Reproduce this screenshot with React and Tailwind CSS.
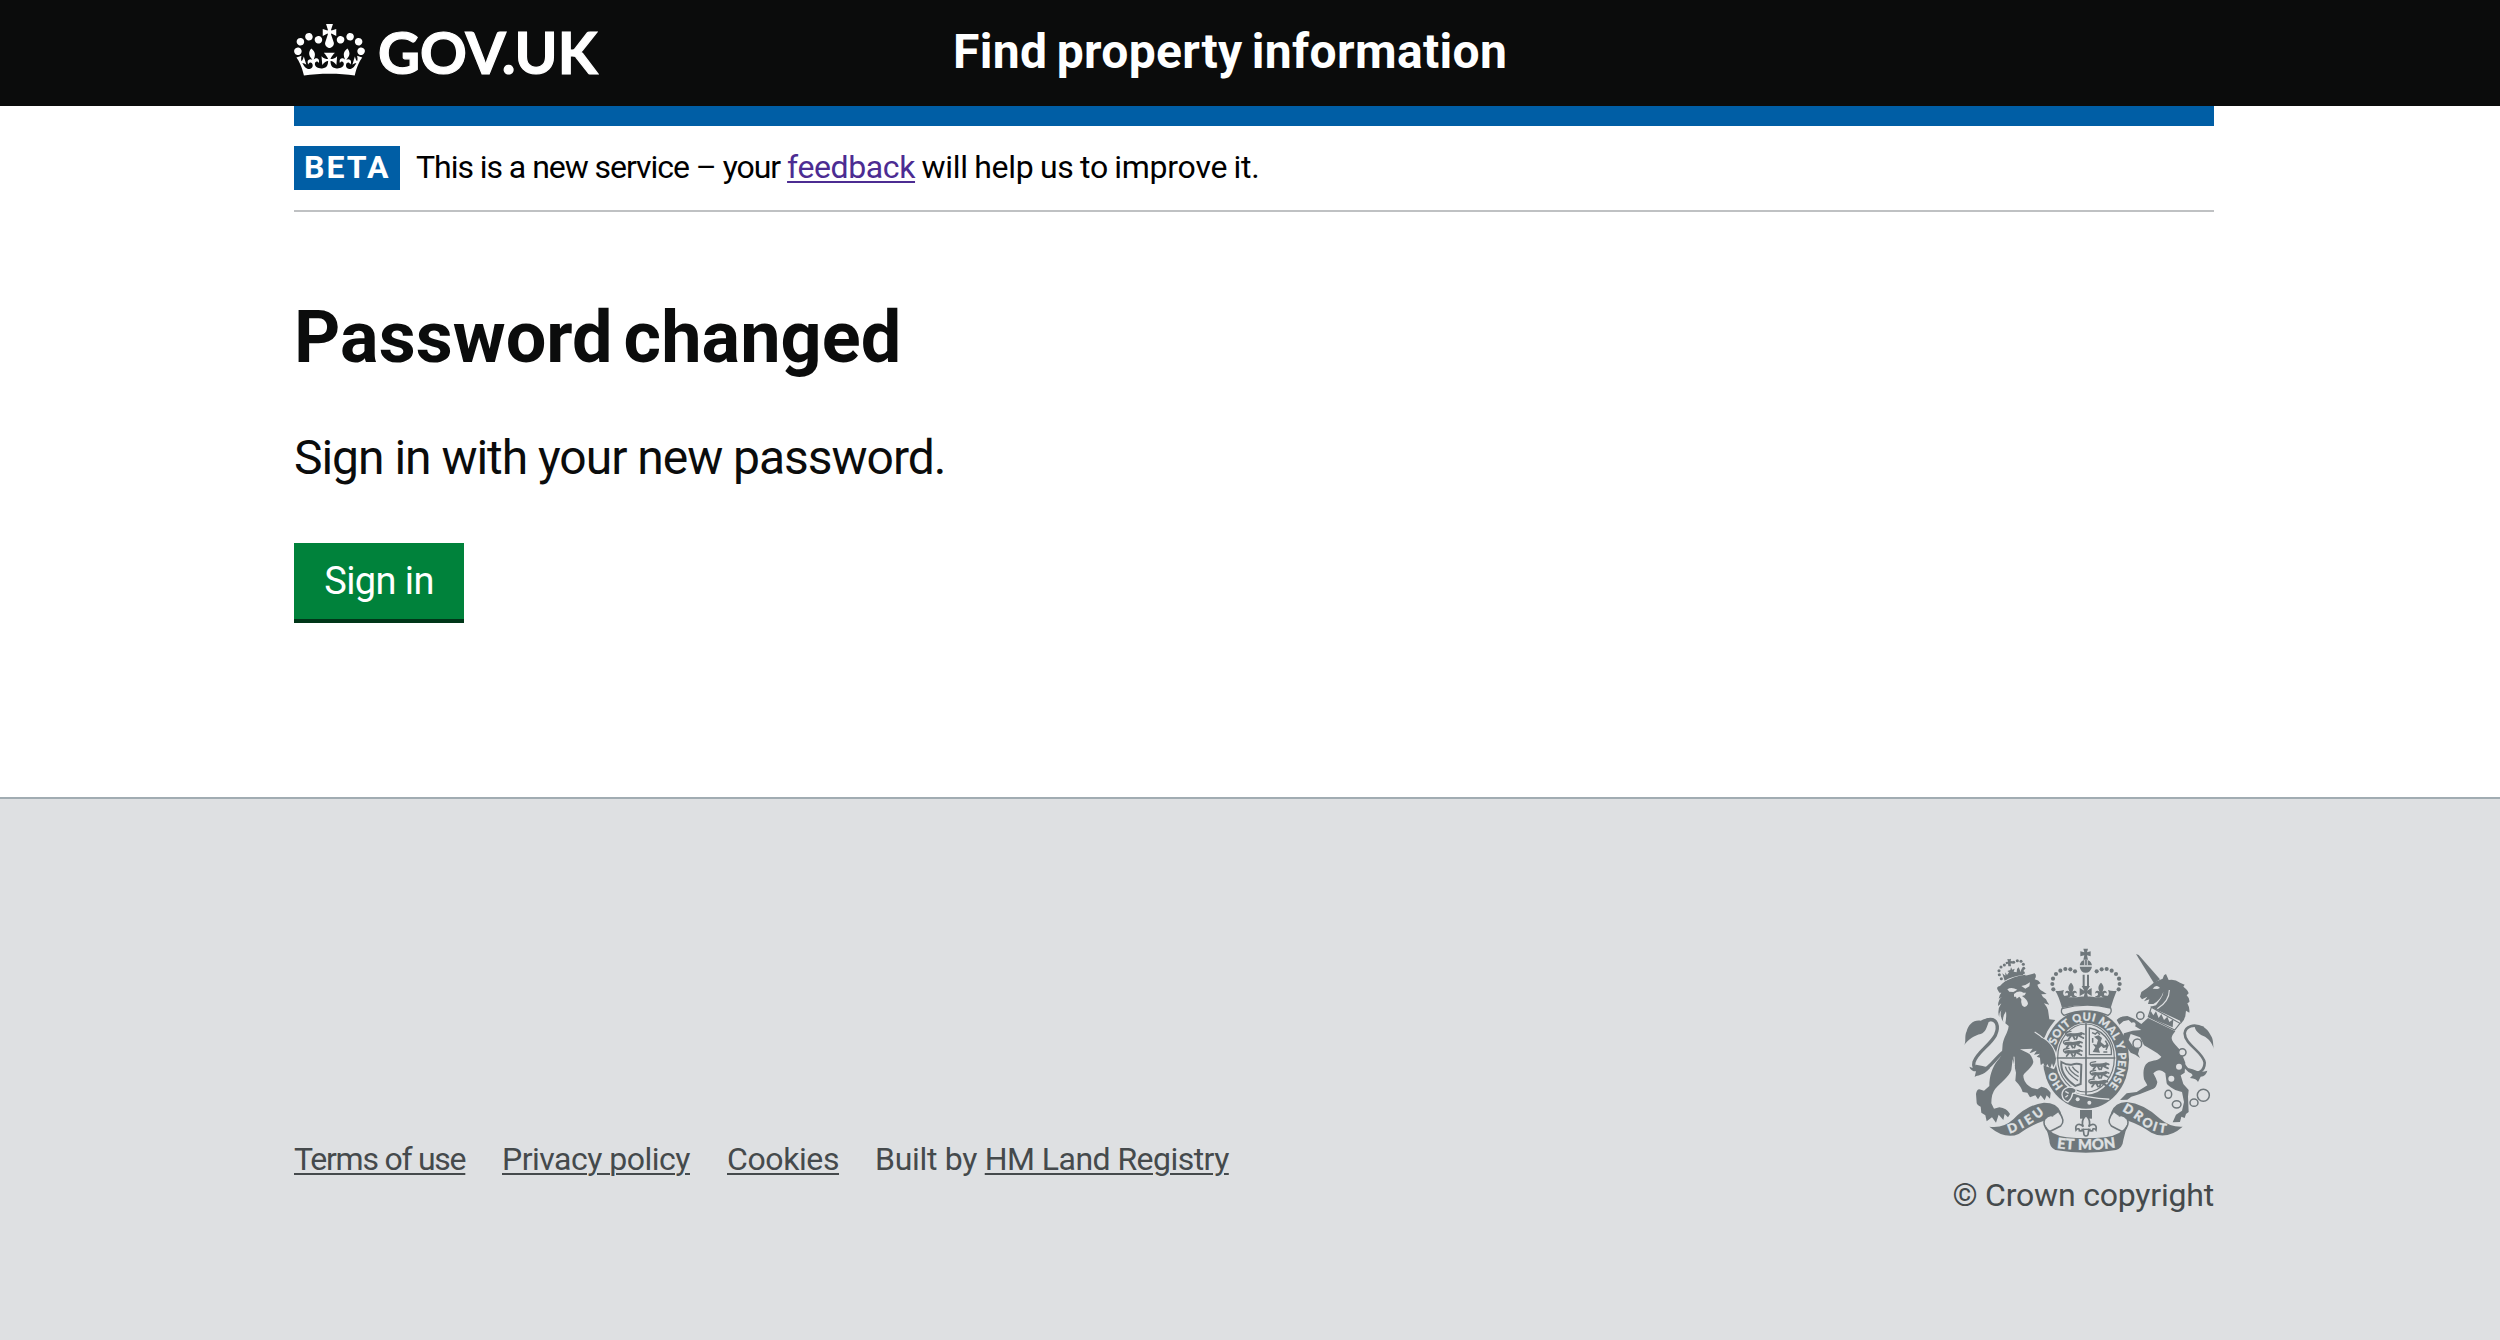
import React from "react";

const CROWN =
  "M25 30.2c3.5 1.5 7.7-.2 9.1-3.7 1.5-3.6-.2-7.8-3.9-9.2-3.6-1.4-7.6.3-9.1 3.9-1.4 3.5.3 7.5 3.9 9zM9 39.5c3.6 1.5 7.8-.2 9.2-3.7 1.5-3.6-.2-7.8-3.9-9.1-3.6-1.5-7.6.2-9.1 3.8-1.4 3.5.3 7.5 3.8 9zM4.4 57.2c3.5 1.5 7.7-.2 9.1-3.8 1.5-3.6-.2-7.7-3.9-9.1-3.5-1.5-7.6.3-9.1 3.8-1.4 3.5.3 7.6 3.9 9.1zm38.3-21.4c3.5 1.5 7.7-.2 9.1-3.8 1.5-3.6-.2-7.7-3.9-9.1-3.6-1.5-7.6.3-9.1 3.8-1.3 3.6.4 7.7 3.9 9.1zm64.4-5.6c-3.6 1.5-7.8-.2-9.1-3.7-1.5-3.6.2-7.8 3.8-9.2 3.6-1.4 7.7.3 9.2 3.9 1.3 3.5-.4 7.5-3.9 9zm15.9 9.3c-3.6 1.5-7.7-.2-9.1-3.7-1.5-3.6.2-7.8 3.7-9.1 3.6-1.5 7.7.2 9.2 3.8 1.5 3.5-.3 7.5-3.8 9zm4.7 17.7c-3.6 1.5-7.8-.2-9.2-3.8-1.5-3.6.2-7.7 3.9-9.1 3.6-1.5 7.7.3 9.2 3.8 1.3 3.5-.4 7.6-3.9 9.1zM89.3 35.8c-3.6 1.5-7.8-.2-9.2-3.8-1.4-3.6.2-7.7 3.9-9.1 3.6-1.5 7.7.3 9.2 3.8 1.4 3.6-.3 7.7-3.9 9.1zM69.7 17.7l8.9 4.7V9.3l-8.9 2.8c-.2-.3-.5-.6-.9-.9L72.4 0H59.6l3.5 11.2c-.3.3-.6.5-.9.9l-8.8-2.8v13.1l8.8-4.7c.3.3.6.7.9.9l-5 15.4v.1c-.2.8-.4 1.6-.4 2.4 0 4.1 3.1 7.5 7 8.1h.2c.3 0 .7.1 1 .1.4 0 .7 0 1-.1h.2c4-.6 7.1-4.1 7.1-8.1 0-.8-.1-1.7-.4-2.4V34l-5.1-15.4c.4-.2.7-.6 1-.9zM66 92.8c16.9 0 32.8 1.1 47.1 3.2 4-16.9 8.9-26.7 14-33.5l-9.6-3.4c1 4.9 1.1 7.2 0 10.2-1.5-1.4-3-4.3-4.2-8.7L108.6 76c2.8-2 5-3.2 7.5-3.3-4.4 9.4-10 11.9-13.6 11.2-4.3-.8-6.3-4.6-5.6-7.9 1-4.7 5.7-5.9 8-.5 4.3-8.7-3-11.4-7.6-8.8 7.1-7.2 7.9-13.5 2.1-21.1-8 6.1-8.1 12.3-4.5 20.8-4.7-5.4-12.1-2.5-9.5 6.2 3.4-5.2 7.9-2 7.2 3.1-.6 4.3-6.4 7.8-13.5 7.2-10.3-.9-10.9-8-11.2-13.8 2.5-.5 7.1 1.8 11 7.3L80.2 60c-4.1 4.4-8 5.3-12.3 5.4 1.4-4.4 8-11.6 8-11.6H55.5s6.4 7.2 7.9 11.6c-4.2-.1-8-1-12.3-5.4l1.4 16.4c3.9-5.5 8.5-7.7 10.9-7.3-.3 5.8-.9 12.8-11.1 13.8-7.2.6-12.9-2.9-13.5-7.2-.7-5 3.8-8.3 7.1-3.1 2.7-8.7-4.6-11.6-9.4-6.2 3.7-8.5 3.6-14.7-4.6-20.8-5.8 7.6-5 13.9 2.2 21.1-4.7-2.6-11.9.1-7.7 8.8 2.3-5.5 7.1-4.2 8.1.5.7 3.3-1.3 7.1-5.7 7.9-3.5.7-9-1.8-13.5-11.2 2.5.1 4.7 1.3 7.5 3.3l-4.7-15.4c-1.2 4.4-2.7 7.2-4.3 8.7-1.1-3-.9-5.3 0-10.2l-9.5 3.4c5 6.9 9.9 16.7 14 33.5 14.8-2.1 30.8-3.2 47.7-3.2z";

const INK = "#6f777b";
const PAPER = "#dee0e2";

// Pearls along the arches of the royal crown
const PEARLS = [
  [340, 178], [337, 162], [339, 146], [348, 132], [361, 122], [376, 117], [391, 118], [405, 124],
  [536, 178], [539, 162], [537, 146], [528, 132], [515, 122], [500, 117], [485, 118], [470, 124],
];
const SMALL_PEARLS = [
  [184, 146], [178, 134], [177, 122], [183, 111], [193, 105], [221, 97], [232, 92], [243, 94], [250, 103], [251, 115], [250, 128],
];

function PassantLion({ x, y }) {
  return (
    <g transform={`translate(${x} ${y})`} fill="none" stroke={INK} strokeLinecap="round" strokeLinejoin="round">
      <path d="M10 9c10-3 22 3 38-3" strokeWidth="10" />
      <path d="M50 3l8 3M44 12l12 6M38 13l-3 8M18 13l-6 8M26 13l4 8" strokeWidth="5.5" />
      <path d="M10 9C2 12 0 2 7 0l12-2" strokeWidth="4" />
    </g>
  );
}

function Fleur({ x, y, s = 1 }) {
  return (
    <path
      transform={`translate(${x} ${y}) scale(${s})`}
      d="M0-26c9 9 10 17 4 27 6-6 15-3 13 6-3-4-8-3-8 2 0 4 4 6 9 5-4 6-14 6-18-1-4 7-14 7-18 1 5 1 9-1 9-5 0-5-5-6-8-2-2-9 7-12 13-6-6-10-5-18 4-27z"
      fill={INK}
    />
  );
}

function RoyalArms() {
  return (
    <svg className="block h-[206px] w-[250px]" viewBox="72 51 750 618" role="img" aria-label="Royal coat of arms">
      <defs>
        <path id="garter-left" d="M370 469A97 115 0 0 1 340 390" />
        <path id="garter-main" d="M347 346A97 115 0 1 1 502 473" />
        <path id="motto-left" d="M208 611Q262 594 322 544" />
        <path id="motto-mid" d="M340 653Q438 667 536 651" />
        <path id="motto-right" d="M546 542Q590 566 612 588Q640 608 690 610" />
      </defs>

      {/* Lion's tail */}
      <path d="M140 270C172 262 178 290 166 316C148 348 112 366 102 396C96 422 124 430 144 412C160 398 172 380 190 366" fill="none" stroke={INK} strokeWidth="10" />
      <path d="M72 346C80 336 72 320 80 304C84 284 102 268 122 272C140 262 156 262 164 268L146 276C140 292 138 306 122 312C104 316 86 326 72 346z" fill={INK} />
      <path d="M88 410C92 420 98 424 108 424L104 441C112 434 128 440 150 414L128 408L108 404L98 414z" fill={INK} />

      {/* Lion's crown */}
      <g fill={INK}>
        {SMALL_PEARLS.map(([x, y]) => <circle key={`${x}-${y}`} cx={x} cy={y} r="4.6" />)}
        <path d="M202 87l6 1 5-2-1 8 6-1v8l-6-1 1 9h-8l-1-8-6 2-1-7 7-1z" />
        <path d="M194 152L187 130l9 7 0-10 5 8 6-8-5-4 9-3 2-8 4 7 7-3-3 9 9 2 1-10 5-5 4 9 0 6 6-12 6 2-3 18Q218 138 194 152z" />
        <path d="M191 157Q222 138 256 134l1 6Q222 146 194 164z" />
      </g>
      {/* Lion */}
      <path
        fill={INK}
        d="M172 178C170 172 174 168 180 168L188 160C212 146 240 140 262 136L284 130C290 136 288 142 284 148Q296 150 302 160L292 164Q296 178 308 184L320 192L304 193Q308 204 318 208Q322 218 328 224L312 220Q322 232 324 240L328 268L346 270L332 288L322 304L312 326C324 334 338 350 346 368L350 386L348 398L342 412L338 400L334 416L324 402L318 414L312 400L304 404L302 384L290 380L300 371L282 374L290 362L268 370L278 356L240 358L262 368Q276 374 280 396C276 414 256 424 250 436C250 452 260 466 276 474L292 478L304 470Q322 472 332 488L330 506L320 496L314 511L302 496L294 508L286 496L270 502L262 488L248 486Q244 470 226 452L228 428L222 402L218 388L214 420C206 442 184 456 166 476Q154 490 154 520L162 536L178 532Q200 534 210 552L204 562L194 552L190 570L176 554L168 578L156 562L140 574L136 556L124 548L122 530Q110 524 110 518L108 492Q110 478 118 478L132 482L148 468C148 440 156 412 174 390C188 376 186 362 188 342C192 320 204 308 206 288L196 280Q200 260 198 244Q186 262 190 276Q178 258 184 240Q176 250 178 262Q170 240 184 220L174 228Q174 208 186 200L176 206Q178 194 184 188L178 188z"
      />
      <path fill={PAPER} d="M202 178Q214 170 232 179L220 186L208 185zM244 168l12-3 14-8-2 12-12 7zM222 192q14-12 28-4l8 0-4 8-8 2q18 12 18 24-8 16-18 4-4-8-2-18l-6-8-8 6-2-6-6 0z" />
      <path d="M284 306Q318 326 347 368" fill="none" stroke={PAPER} strokeWidth="3.5" />
      <path d="M222 380Q226 404 220 436" fill="none" stroke={PAPER} strokeWidth="3" />

      {/* Unicorn's tail */}
      <path d="M790 294C762 280 736 288 734 310C734 344 790 366 794 398C794 424 772 434 754 426C740 420 732 406 726 394" fill="none" stroke={INK} strokeWidth="8" />
      <path d="M822 358C818 346 822 330 812 316C804 300 798 296 790 290L764 288C764 300 776 312 790 318C804 324 816 336 822 358z" fill={INK} />
      <path d="M744 414L758 418Q780 430 802 422Q798 438 782 440L774 456Q770 446 750 444L758 436z" fill={INK} />

      {/* Unicorn */}
      <path d="M588 72L596 75L660 148L642 160z" fill={INK} />
      <path
        fill={INK}
        d="M600 200L604 186L622 174L644 156L668 146L672 136L678 132L686 150Q704 146 720 158L734 164L730 170Q744 180 746 190L740 196Q750 206 748 216L742 220Q750 234 748 248L738 242L736 258Q734 270 722 282L720 272L630 230L648 226L662 206Q670 196 670 186Q662 210 640 222L624 222L628 208L612 214L622 200L606 208z"
      />
      <path d="M638 176q8-12 18-6l4 4-8 3z" fill={PAPER} />
      <path d="M688 180Q688 214 652 236" fill="none" stroke={PAPER} strokeWidth="3.5" />
      <path d="M634 232L720 280L704 300L625 260z" fill={PAPER} stroke={INK} strokeWidth="3.5" />
      <path d="M626 262l6-20 8 14 8-12 8 20 8-12 8 18 10-10 6 16 12-8-2 24z" fill={INK} />
      <path
        fill={INK}
        d="M624 264L706 304C694 318 690 326 704 342L722 362L736 398L734 428L722 436L730 462L746 480L744 500L746 546L738 552L734 564L724 560L720 576L698 577L708 554L726 542L732 516L726 486Q708 482 702 478Q682 466 680 460L676 430C664 420 654 416 640 430Q648 444 652 456Q650 472 640 476L600 492L574 500L562 509L540 510L560 490L590 486L622 466L612 448C608 420 612 404 626 396C640 390 656 392 664 380C650 366 628 356 612 346L600 322L572 312L566 330L580 350L598 358L594 372L600 384L586 374L572 368L556 346L548 322L552 310L578 302L604 300L584 288L566 270L550 274L538 284L530 270Q540 258 562 258L582 266L604 282z"
      />
      <g fill={PAPER} stroke={INK} strokeWidth="4.5">
        <circle cx="601" cy="257" r="11" />
        <ellipse cx="592" cy="341" rx="13" ry="14" />
        <circle cx="727" cy="367" r="11" />
        <ellipse cx="685" cy="493" rx="10" ry="12" />
        <ellipse cx="710" cy="523" rx="13" ry="11" />
        <ellipse cx="762" cy="518" rx="12" ry="11" />
        <circle cx="790" cy="496" r="18" />
      </g>
      <g fill={PAPER}>
        <circle cx="580" cy="284" r="7" />
        <circle cx="717" cy="410" r="9" />
        <circle cx="694" cy="446" r="9" />
      </g>

      {/* Royal crown */}
      <g fill={INK}>
        {PEARLS.map(([x, y]) => <circle key={`${x}-${y}`} cx={x} cy={y} r="6.2" />)}
        <path d="M430 56h14l-3 11 11-3v15l-11-3 3 13h-14l3-13-12 3V64l12 3z" />
        <path d="M419 106Q422 90 437 89Q453 90 456 106zM419 110h37Q452 128 437 128Q422 128 419 110z" />
        <path d="M428 134h6v34h-6zM441 134h6v34h-6z" />
        <path d="M425 168h25l-9 14 14-8v24l-14-8 4 16h-15l4-16-15 8v-24l14 8z" />
        <path d="M346 182q12 2 26-2-6 12 2 18 8-4 12 4l24 0q14-4 28-2 14-2 28 2l24 0q4-8 12-4 8-6 2-18 12 4 26 2Q520 206 512 234Q438 216 366 234Q358 202 346 182z" />
      </g>
      <Fleur x={393} y={184} />
      <Fleur x={483} y={184} />
      <path d="M434 90v16M442 90v16" stroke={PAPER} strokeWidth="2.5" />

      {/* Garter */}
      <ellipse cx="438" cy="388" rx="129" ry="148" fill={INK} />
      <ellipse cx="438" cy="386" rx="91" ry="108" fill={PAPER} />
      <path d="M366 236Q438 216 512 234Q518 248 504 256Q438 230 372 256Q360 248 366 236z" fill={PAPER} stroke={INK} strokeWidth="4" />
      <path d="M313 322Q344 346 352 380Q350 404 342 418L306 404z" fill={PAPER} />
      <path d="M306 324C326 334 338 350 344 368L348 386L346 398L340 412L336 400L330 416L322 402L316 414L310 400L302 404L300 384z" fill={INK} />
      <ellipse cx="438" cy="384" rx="85" ry="102" fill="none" stroke={INK} strokeWidth="3.5" />
      <path d="M438 280V496M350 384H526" stroke={INK} strokeWidth="5" />
      <PassantLion x={374} y={306} />
      <PassantLion x={368} y={332} />
      <PassantLion x={368} y={357} />
      <PassantLion x={448} y={397} />
      <PassantLion x={448} y={423} />
      <PassantLion x={444} y={449} />
      <path d="M448 294Q486 300 506 334Q516 352 514 374H448z" fill="none" stroke={INK} strokeWidth="4" />
      <path d="M458 366l8-14-8-10 12 2 4-14-12-10 14-4 10 8-4 12 12 10 10-6-2 12-12 2-6-6-8 8 4 12z" fill={INK} />
      <path d="M456 308l10 4 6-6 8 8M496 332l8 14-6 14M458 324v14M490 366l12 0" fill="none" stroke={INK} strokeWidth="4.5" />
      <path d="M364 396Q360 436 406 468L422 462L424 404Q410 398 396 404Q380 406 364 396z" fill="none" stroke={INK} strokeWidth="6" />
      <path d="M376 410Q380 430 414 452M386 410Q390 426 416 440M397 410Q402 420 416 428" fill="none" stroke={INK} strokeWidth="4" />
      {/* Strap and buckle */}
      <path d="M398 488Q440 504 508 508" fill="none" stroke={PAPER} strokeWidth="4.5" />
      <path d="M384 472Q366 478 366 494Q368 512 384 516Q396 504 398 490Q410 490 408 478Q398 470 384 472z" fill={INK} stroke={PAPER} strokeWidth="4" />
      <path d="M376 484l10 6M376 502l8-6" stroke={PAPER} strokeWidth="4" />
      <circle cx="413" cy="508" r="6" fill={PAPER} />
      <circle cx="448" cy="518" r="6" fill={PAPER} />
      <g fill={PAPER} stroke={PAPER} strokeWidth="0.8" fontFamily="Lato, 'Liberation Sans', sans-serif" fontWeight="900" fontSize="33">
        <text><textPath href="#garter-left">HO</textPath></text>
        <text><textPath href="#garter-main" textLength="380" lengthAdjust="spacing">SOIT QUI MAL Y PENSE</textPath></text>
      </g>

      {/* Fleur-de-lis below the garter */}
      <path d="M420 540H456V566H420z" fill={INK} />
      <path d="M438 556C450 568 452 578 446 590C456 578 472 582 468 600C464 594 456 596 458 602C452 604 448 602 446 600L444 614Q438 622 432 614L430 600C428 602 424 604 418 602C420 596 412 594 408 600C404 582 420 578 430 590C424 578 426 568 438 556z" fill={PAPER} stroke={INK} strokeWidth="5" />
      <path d="M424 598H452" stroke={INK} strokeWidth="4" />

      {/* Motto scroll */}
      <path d="M148 590Q190 596 220 568Q262 524 312 518Q352 518 362 546Q370 570 366 580Q352 556 334 556Q318 558 312 572Q270 586 236 612Q196 630 148 590z" fill={INK} />
      <path d="M728 590Q690 592 660 566Q610 520 560 516Q524 518 514 546Q506 570 510 580Q524 556 542 556Q558 558 564 572Q600 584 634 608Q680 632 728 590z" fill={INK} />
      <path d="M356 546Q378 572 362 588Q344 598 326 606Q306 584 314 568Q326 552 340 558" fill={PAPER} stroke={INK} strokeWidth="4.5" />
      <path d="M520 546Q498 572 514 588Q532 598 550 606Q570 584 562 568Q550 552 536 558" fill={PAPER} stroke={INK} strokeWidth="4.5" />
      <path d="M312 580Q330 616 380 622Q438 628 496 622Q546 616 564 580Q556 604 550 630Q548 654 528 660Q438 676 346 660Q328 652 328 630Q322 600 312 580z" fill={INK} />
      <g fill={PAPER} stroke={PAPER} strokeWidth="1" fontFamily="Lato, 'Liberation Sans', sans-serif" fontWeight="900">
        <text fontSize="38">
          <textPath href="#motto-left" textLength="122" lengthAdjust="spacing">DIEU</textPath>
        </text>
        <text fontSize="44">
          <textPath href="#motto-mid" startOffset="10" textLength="178" lengthAdjust="spacing">ET MON</textPath>
        </text>
        <text fontSize="38">
          <textPath href="#motto-right" textLength="150" lengthAdjust="spacing">DROIT</textPath>
        </text>
      </g>
    </svg>
  );
}

function FooterLink({ className, children }) {
  return (
    <a href="#" className={`underline decoration-2 underline-offset-[3px] ${className}`}>
      {children}
    </a>
  );
}

export default function App() {
  return (
    <div className="flex h-[1340px] w-full flex-col overflow-hidden bg-white font-['Roboto','Liberation_Sans',sans-serif] text-[#0b0c0c]">
      <header className="h-[106px] shrink-0 bg-[#0b0c0c] text-white">
        <div className="ml-[294px] flex w-[1920px]">
          <a href="#" className="flex w-[659px] pt-[24px]">
            <svg className="h-[52px] w-[71px]" viewBox="0 0 132 97" fill="currentColor" aria-hidden="true">
              <path d={CROWN} />
            </svg>
            <span className="mt-[-7px] ml-[13px] font-['Lato','Roboto',sans-serif] text-[58px] leading-[70px] font-bold [-webkit-text-stroke:1.2px_white]">GOV.UK</span>
          </a>
          <a href="#" className="mt-[28px] text-[48px] leading-[48px] font-bold tracking-[0.35px] [word-spacing:-3px] whitespace-nowrap">
            Find property information
          </a>
        </div>
      </header>

      <div className="ml-[294px] w-[1920px] shrink-0">
        <div className="h-[20px] bg-[#005ea5]" />
        <div className="flex h-[86px] items-start border-b-2 border-[#bfc1c3] pt-[20px] text-[32px] leading-[42px] text-black">
          <strong className="h-[44px] w-[106px] bg-[#005ea5] pl-[10px] font-bold tracking-[2px] text-white">BETA</strong>
          <p className="pl-[16px] whitespace-pre">
            <span className="tracking-[-1.04px]">This is a new service – your </span>
            <a href="#" className="tracking-[-0.39px] text-[#4c2c92] underline decoration-2 underline-offset-[3px]">feedback</a>
            <span className="tracking-[-0.25px] [word-spacing:-1.3px]"> will help us to improve it.</span>
          </p>
        </div>
      </div>

      <main className="ml-[294px] h-[585px] w-[1920px] shrink-0">
        <h1 className="pt-[88px] text-[72px] leading-[76px] font-bold tracking-[0.05px] [word-spacing:-7px]">Password changed</h1>
        <p className="mt-[52px] text-[48px] leading-[60px] tracking-[-1.03px]">Sign in with your new password.</p>
        <a href="#" className="mt-[55px] flex h-[80px] w-[170px] justify-center border-b-4 border-[#003618] bg-[#00823b] text-[38px] leading-[77px] tracking-[-0.6px] text-white">
          Sign in
        </a>
      </main>

      <footer className="flex-1 border-t-2 border-[#a1acb2] bg-[#dee0e2] text-[32px] leading-[40px] text-[#454a4c]">
        <div className="ml-[294px] flex w-[1920px] justify-between">
          <ul className="flex pt-[340px] whitespace-pre">
            <li className="w-[208px]"><FooterLink className="tracking-[-1.25px]">Terms of use</FooterLink></li>
            <li className="w-[225px]"><FooterLink className="tracking-[-0.5px]">Privacy policy</FooterLink></li>
            <li className="w-[148px]"><FooterLink className="tracking-[-0.4px]">Cookies</FooterLink></li>
            <li>
              <span className="tracking-[-0.3px]">Built by </span>
              <FooterLink className="tracking-[-0.54px]">HM Land Registry</FooterLink>
            </li>
          </ul>
          <div className="flex flex-col items-end pt-[148px]">
            <RoyalArms />
            <a href="#" className="mt-[22px] tracking-[-0.2px]">© Crown copyright</a>
          </div>
        </div>
      </footer>
    </div>
  );
}
